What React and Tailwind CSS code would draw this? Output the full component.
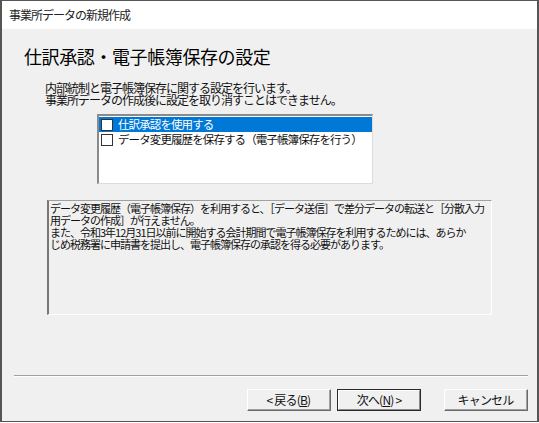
import React from 'react';

const font = { fontFamily: '"Noto Sans CJK JP", "Noto Sans", sans-serif' };

// Classic raised dialog button
const Button = ({ children, primary }) => (
  <div
    className={
      primary
        ? 'w-[84px] h-[22px] border border-[#2a2a2a] bg-[#f0f0f0]'
        : 'w-[84px] h-[22px] border border-t-white border-l-white border-b-[#6a6a6a] border-r-[#6a6a6a] bg-[#f0f0f0]'
    }
  >
    <div
      className={
        primary
          ? 'h-full border border-t-white border-l-white border-b-[#8a8a8a] border-r-[#8a8a8a] flex items-center justify-center'
          : 'h-full border-b border-r border-[#a0a0a0] flex items-center justify-center'
      }
    >
      <span className="text-[12px] leading-none tracking-[-0.8px] text-[#111]">{children}</span>
    </div>
  </div>
);

const CheckItem = ({ label, selected }) => (
  <div
    className={
      selected
        ? 'h-[15px] flex items-center bg-[#0078d7] text-white'
        : 'h-[15px] flex items-center text-[#111]'
    }
  >
    <div className="ml-[2px] w-[12px] h-[12px] border border-[#333] bg-white" />
    <span className="ml-[5px] text-[11.5px] leading-none tracking-[-0.9px] whitespace-nowrap">
      {label}
    </span>
  </div>
);

export default function App() {
  return (
    <div className="w-[539px] h-[423px] bg-white" style={font}>
      <div className="w-[539px] h-[422px] border-x-2 border-y border-[#555] flex flex-col">
        {/* Title bar */}
        <div className="h-[28px] bg-white flex items-center pl-[7px]">
          <span className="text-[12px] tracking-[-1px] text-[#222]">事業所データの新規作成</span>
        </div>

        {/* Body */}
        <div className="flex-1 bg-[#f0f0f0] flex flex-col pt-[15px] pl-[22px]">
          <h1 className="text-[18px] leading-[24px] tracking-[-0.4px] text-black">
            仕訳承認・電子帳簿保存の設定
          </h1>

          <div className="mt-[14px] ml-[21px] text-[12px] leading-[12px] tracking-[-1px] text-[#111]">
            <div>内部統制と電子帳簿保存に関する設定を行います。</div>
            <div>事業所データの作成後に設定を取り消すことはできません。</div>
          </div>

          {/* Checked list */}
          <div className="mt-[8px] ml-[73px] w-[276px] h-[70px] border-t-2 border-l-2 border-t-[#8a8a8a] border-l-[#8a8a8a] border-r border-b border-r-[#dcdcdc] border-b-[#dcdcdc] bg-white pt-[1px]">
            <CheckItem label="仕訳承認を使用する" selected />
            <CheckItem label="データ変更履歴を保存する（電子帳簿保存を行う）" />
          </div>

          {/* Read-only note */}
          <div className="mt-[16px] ml-[23px] w-[445px] h-[115px] border-t border-l-2 border-t-[#a0a0a0] border-l-[#777] border-r border-b border-r-white border-b-white bg-[#f0f0f0] pt-[1px] pl-[1px] text-[11px] leading-[12px] tracking-[-1px] text-[#111] whitespace-nowrap">
            <div>データ変更履歴（電子帳簿保存）を利用すると、［データ送信］で差分データの転送と［分散入力</div>
            <div>用データの作成］が行えません。</div>
            <div>また、令和3年12月31日以前に開始する会計期間で電子帳簿保存を利用するためには、あらか</div>
            <div>じめ税務署に申請書を提出し、電子帳簿保存の承認を得る必要があります。</div>
          </div>

          {/* Separator */}
          <div className="mt-[60px] -ml-[10px] w-[514px] border-t border-b border-t-[#a0a0a0] border-b-white" />

          {/* Buttons */}
          <div className="mt-[12px] flex justify-end pr-[9px]">
            <div className="flex gap-[6px]">
              <Button>&lt; 戻る(<span className="underline">B</span>)</Button>
              <Button primary>次へ(<span className="underline">N</span>) &gt;</Button>
            </div>
            <div className="ml-[23px]">
              <Button>キャンセル</Button>
            </div>
          </div>
        </div>
      </div>
    </div>
  );
}
